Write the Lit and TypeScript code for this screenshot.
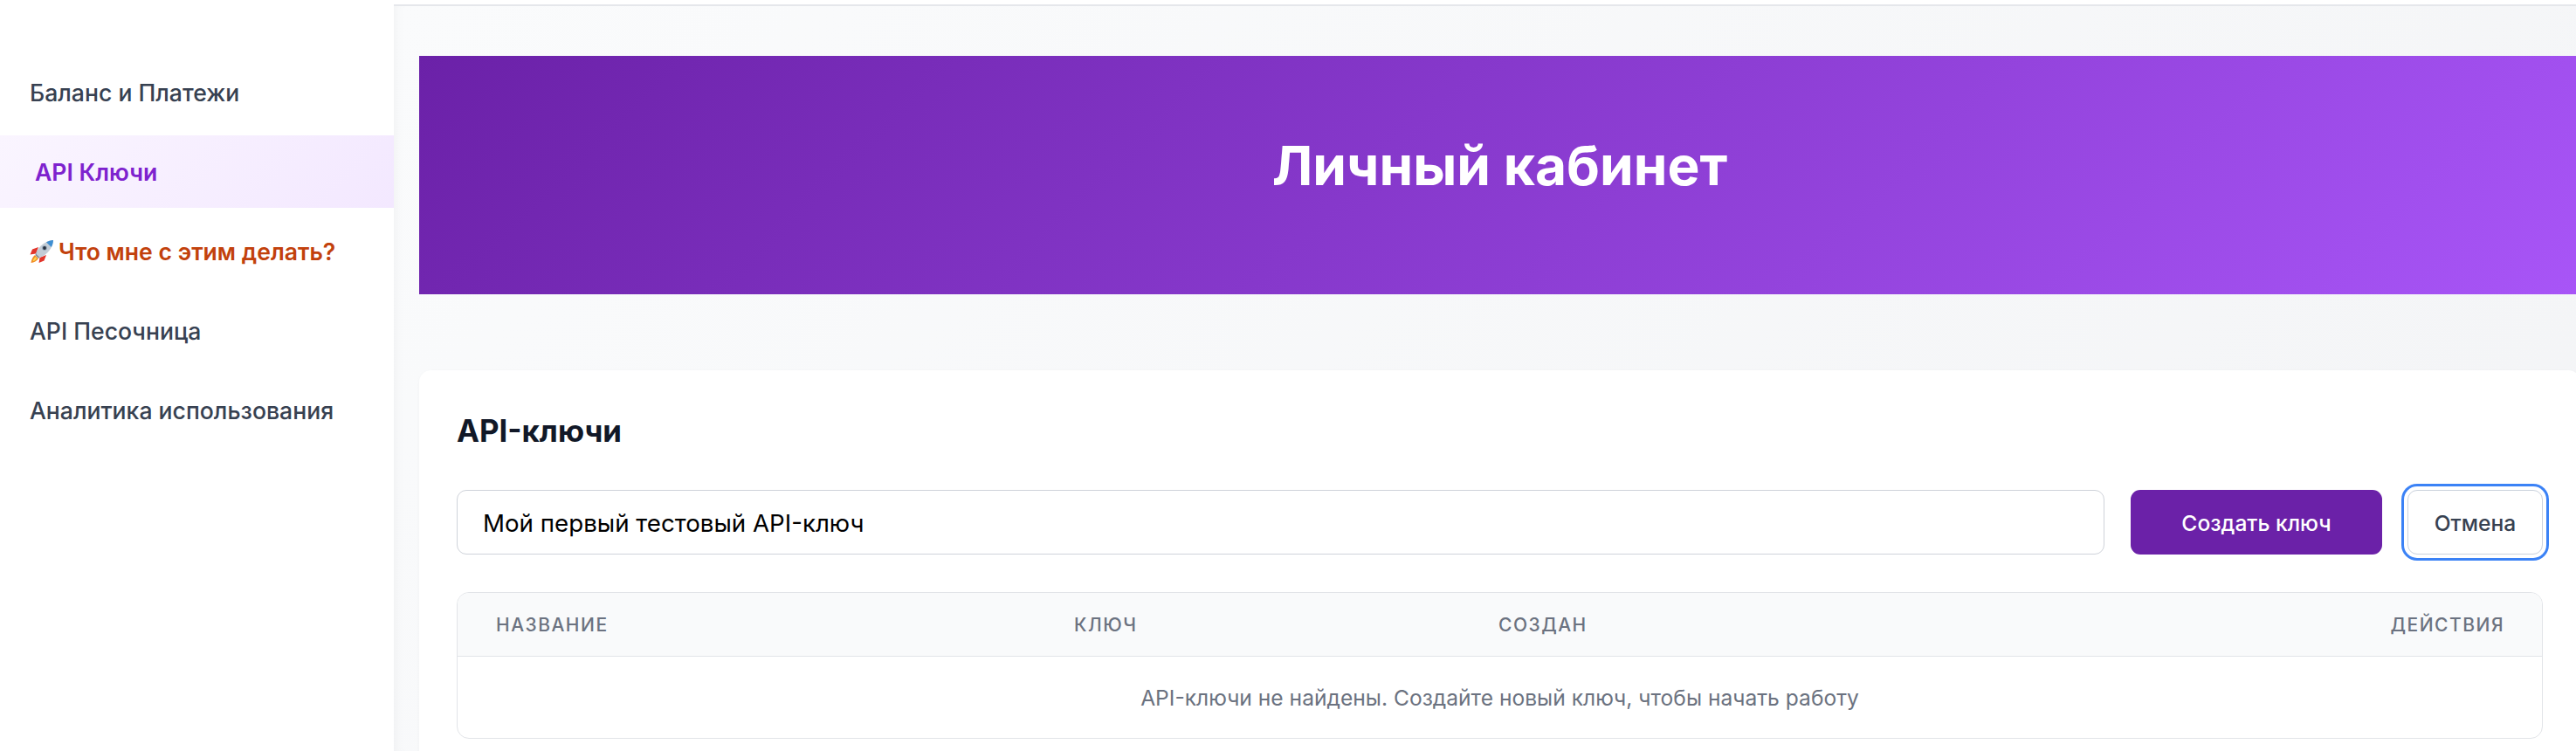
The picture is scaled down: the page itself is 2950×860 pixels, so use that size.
import { LitElement, html, css } from 'lit';
import { customElement } from 'lit/decorators.js';

const NAV_ITEMS = [
  { label: 'Баланс и Платежи' },
  { label: 'API Ключи', active: true },
  { label: 'Что мне с этим делать?', promo: true },
  { label: 'API Песочница' },
  { label: 'Аналитика использования' },
];

@customElement('app-root')
export class AppRoot extends LitElement {
  static styles = css`
    :host {
      display: block;
      width: 2950px;
      height: 860px;
      overflow: hidden;
      background: #fff;
      font-family: Inter, 'Liberation Sans', sans-serif;
    }

    .layout {
      display: flex;
      width: 2984px;
      height: 860px;
    }

    .sidebar {
      flex: 0 0 451px;
      padding-top: 64px;
      box-sizing: border-box;
      display: flex;
      flex-direction: column;
      gap: 8px;
    }

    .nav-item {
      height: 83px;
      display: flex;
      align-items: center;
      gap: 6px;
      padding-left: 34px;
      font-size: 26.6px;
      font-weight: 500;
      color: #374151;
    }

    .nav-item.active {
      padding-left: 40px;
      color: #7e22ce;
      font-weight: 600;
      background: linear-gradient(135deg, #faf5ff, #f3e8ff);
    }

    .nav-item.promo {
      gap: 5px;
      color: #c2410c;
      font-weight: 600;
    }

    .rocket {
      width: 28px;
      height: 28px;
      flex: none;
    }

    .main {
      flex: 1;
      margin-top: 5px;
      border-top: 2px solid #e5e7eb;
      background: linear-gradient(135deg, #fafbfc, #f3f4f6);
      box-shadow: inset 10px 0 14px -10px rgba(0, 0, 0, 0.05);
      padding: 57px 29px 0;
      box-sizing: border-box;
    }

    .hero {
      height: 273px;
      box-sizing: border-box;
      padding-bottom: 22px;
      display: flex;
      align-items: center;
      justify-content: center;
      background: linear-gradient(135deg, #6b21a8, #a855f7);
    }

    .hero h1 {
      margin: 0;
      font-size: 62.2px;
      font-weight: 700;
      color: #fff;
    }

    .card {
      margin-top: 87px;
      padding: 43px;
      background: #fff;
      border-radius: 14px;
      box-shadow: 0 1px 4px rgba(0, 0, 0, 0.03);
    }

    .card h2 {
      margin: 0 0 42px;
      font-size: 34.8px;
      line-height: 52px;
      font-weight: 700;
      color: #111827;
    }

    .form {
      display: flex;
      gap: 29px;
      margin-bottom: 43px;
    }

    .input {
      flex: 1;
      min-width: 0;
      height: 74px;
      box-sizing: border-box;
      padding: 2px 29px 0;
      margin-right: 1px;
      border: 1px solid #cfd3da;
      border-radius: 11px;
      font: inherit;
      font-size: 27.7px;
      color: #000;
      background: #fff;
      outline: none;
    }

    button {
      height: 74px;
      box-sizing: border-box;
      padding: 2px 0 0;
      border-radius: 11px;
      font: inherit;
      font-size: 24.6px;
      font-weight: 500;
    }

    .create {
      width: 288px;
      border: none;
      background: #6b21a8;
      color: #fff;
    }

    .cancel {
      width: 155px;
      border: 1px solid #cbd2dd;
      background: #fff;
      color: #374151;
      box-shadow: 0 0 0 4px #fff, 0 0 0 7px #3b82f6;
    }

    .table {
      border: 1px solid #e2e4e8;
      border-radius: 14px;
      overflow: hidden;
    }

    .thead {
      display: grid;
      grid-template-columns: 662px 486px 1fr auto;
      align-items: center;
      height: 72px;
      padding: 0 43px 0 44px;
      background: #f9fafb;
      border-bottom: 1px solid #e2e4e8;
      font-size: 21px;
      font-weight: 500;
      letter-spacing: 1.5px;
      text-transform: uppercase;
      color: #6b7280;
    }

    .empty {
      height: 93px;
      display: flex;
      align-items: center;
      justify-content: center;
      font-size: 24.6px;
      color: #6b7280;
    }
  `;

  private renderRocket() {
    return html`<svg class="rocket" viewBox="0 0 28 28" aria-hidden="true">
      <path d="M10 9L3 11.5.5 17.5 7 16.5z" fill="#e2352b" />
      <path d="M19 18l-2.500 6.500L10.500 27l1-6z" fill="#e2352b" />
      <path d="M6 18l4 4c-2 3-5 4.500-8.500 5C2 23 3.500 20 6 18z" fill="#f08a24" />
      <path d="M6.500 20l1.800 1.800C7 24 5 25 3.500 25.300 3.800 23.500 5 21.500 6.500 20z" fill="#fcd34d" />
      <path d="M27 1C21 1 14 5 9 12l-2.500 6L10 21.500l6-2.500C23 14 27 7 27 1z" fill="#c3ccd6" />
      <path d="M9 12l-2.500 6L10 21.500l1.500-.600-4-4z" fill="#7b8794" />
      <path d="M27 1c-3 0-5.500 1-8 2.300L24.800 9C26 6.800 27 4 27 1z" fill="#3f8fd2" />
      <circle cx="17" cy="10" r="2.800" fill="#8fa3b5" />
      <circle cx="17" cy="10" r="1.900" fill="#27303d" />
    </svg>`;
  }

  render() {
    return html`
      <div class="layout">
        <nav class="sidebar">
          ${NAV_ITEMS.map(
            (item) => html`
              <div class="nav-item ${item.active ? 'active' : ''} ${item.promo ? 'promo' : ''}">
                ${item.promo ? this.renderRocket() : ''}
                <span>${item.label}</span>
              </div>
            `
          )}
        </nav>
        <main class="main">
          <header class="hero"><h1>Личный кабинет</h1></header>
          <section class="card">
            <h2>API-ключи</h2>
            <div class="form">
              <input class="input" .value=${'Мой первый тестовый API-ключ'} />
              <button class="create">Создать ключ</button>
              <button class="cancel">Отмена</button>
            </div>
            <div class="table">
              <div class="thead">
                <span>Название</span>
                <span>Ключ</span>
                <span>Создан</span>
                <span>Действия</span>
              </div>
              <div class="empty">API-ключи не найдены. Создайте новый ключ, чтобы начать работу</div>
            </div>
          </section>
        </main>
      </div>
    `;
  }
}
